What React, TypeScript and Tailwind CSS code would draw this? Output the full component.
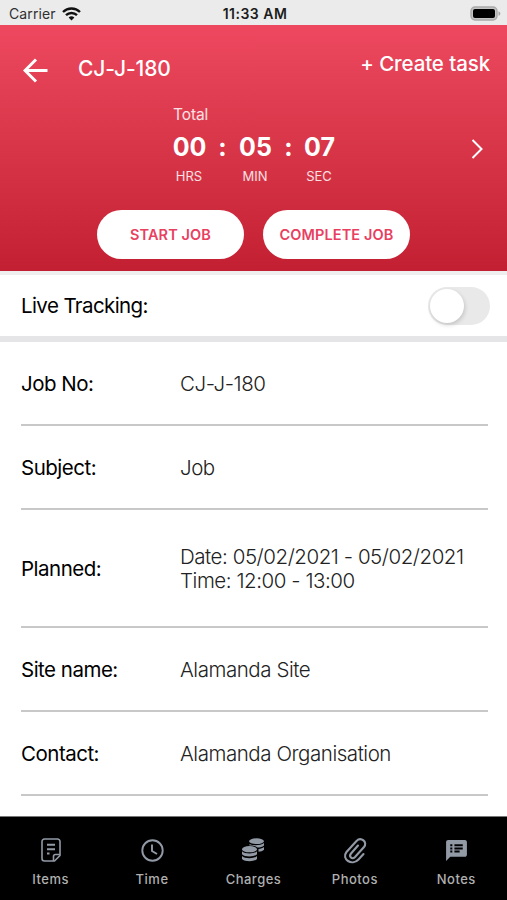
import { MdSpeakerNotes } from "react-icons/md";

type Detail = { label: string; lines: string[]; height: string };

const details: Detail[] = [
  { label: "Job No:", lines: ["CJ-J-180"], height: "h-[84px]" },
  { label: "Subject:", lines: ["Job"], height: "h-[84px]" },
  {
    label: "Planned:",
    lines: ["Date: 05/02/2021 - 05/02/2021", "Time: 12:00 - 13:00"],
    height: "h-[118px]",
  },
  { label: "Site name:", lines: ["Alamanda Site"], height: "h-[84px]" },
  { label: "Contact:", lines: ["Alamanda Organisation"], height: "h-[84px]" },
];

export default function App() {
  return (
    <div className="flex h-[900px] w-[507px] flex-col overflow-hidden bg-white font-['Inter','Liberation_Sans',sans-serif] text-black">
      <StatusBar />
      <JobHeader />
      <LiveTracking />

      <main className="flex-1 overflow-hidden pl-[21px] pr-[19px]">
        {details.map((detail) => (
          <DetailRow key={detail.label} {...detail} />
        ))}
      </main>

      <TabBar />
    </div>
  );
}

/* ---------------- STATUS BAR ---------------- */

function StatusBar() {
  return (
    <div className="grid h-[25px] shrink-0 grid-cols-3 items-center bg-[#ebebeb] pt-[2px] pl-[9px] pr-[6px]">
      <div className="flex items-center gap-[6px]">
        <span className="text-[14px] leading-5 tracking-[0.1px] text-[#303030]">Carrier</span>
        <WifiIcon />
      </div>
      <span className="text-center text-[14px] leading-5 font-semibold tracking-[0.5px] text-[#1c1c1c]">11:33 AM</span>
      <div className="flex justify-end">
        <BatteryIcon />
      </div>
    </div>
  );
}

/* ---------------- HEADER ---------------- */

function JobHeader() {
  return (
    <header className="h-[246px] shrink-0 bg-linear-to-b from-[#ed485f] to-[#c31f32] text-white">
      <div className="flex h-[80px] items-start pl-[23px] pr-[17px]">
        <svg className="mt-[33px]" width="25" height="25" viewBox="0 0 25 25" fill="none" stroke="currentColor" strokeWidth="3">
          <path d="M24.5 12.5H2M13 1.5L2 12.5l11 11" />
        </svg>
        <h1 className="mt-[30px] ml-[30px] text-[21px] leading-7 font-medium tracking-[-0.1px]">CJ-J-180</h1>
        <button className="mt-[25px] ml-auto text-[20.5px] leading-7 font-medium tracking-[-0.1px]">+ Create task</button>
      </div>

      <div className="flex h-[105px] items-start pl-[173px] pr-[24px]">
        <div>
          <p className="text-[15.5px] leading-5 tracking-[-0.1px] text-white/85">Total</p>
          <div className="mt-[6px] flex">
            <TimeUnit value="00" unit="HRS" />
            <Colon />
            <TimeUnit value="05" unit="MIN" />
            <Colon />
            <div className="-ml-[2px]">
              <TimeUnit value="07" unit="SEC" />
            </div>
          </div>
        </div>
        <svg className="mt-[34px] ml-auto" width="12" height="20" viewBox="0 0 12 20" fill="none" stroke="currentColor" strokeWidth="2">
          <path d="M1.5 1l9 9-9 9" />
        </svg>
      </div>

      <div className="flex gap-[19px] pl-[97px]">
        <JobButton>START JOB</JobButton>
        <JobButton>COMPLETE JOB</JobButton>
      </div>
    </header>
  );
}

function TimeUnit({ value, unit }: { value: string; unit: string }) {
  return (
    <div className="flex w-[33px] flex-col items-center">
      <span className="text-[25px] leading-8 font-bold">{value}</span>
      <span className="mt-[3px] -ml-px text-[13px] leading-5 text-white/85">{unit}</span>
    </div>
  );
}

function Colon() {
  return <span className="w-[33px] text-center text-[25px] leading-8 font-bold">:</span>;
}

function JobButton({ children }: { children: React.ReactNode }) {
  return (
    <button className="h-[49px] w-[147px] rounded-full bg-white text-[14.5px] font-semibold tracking-[0.1px] text-[#e8405f]">
      {children}
    </button>
  );
}

/* ---------------- CONTENT ---------------- */

function LiveTracking() {
  return (
    <div className="flex h-[71px] shrink-0 items-center justify-between border-t-4 border-b-6 border-t-[#f0eff0] border-b-[#e5e5e8] pl-[21px] pr-[17px]">
      <span className="pt-[2px] text-[20.5px] tracking-[-0.6px]">Live Tracking:</span>
      <div className="flex h-[38px] w-[62px] items-center rounded-full bg-[#e9e9e9] p-[2px]">
        <div className="size-[34px] rounded-full bg-white shadow-[1px_2px_4px_rgba(0,0,0,0.16)]" />
      </div>
    </div>
  );
}

function DetailRow({ label, lines, height }: Detail) {
  return (
    <div className={`flex items-center border-b-2 border-[#c8c8c8] ${height}`}>
      <span className="w-[159px] pt-[3px] text-[20.5px] tracking-[-0.5px]">{label}</span>
      <div className="pt-[2px] text-[20.5px] leading-6 font-light tracking-[-0.45px] text-[#222]">
        {lines.map((line) => (
          <p key={line} className="whitespace-nowrap">
            {line}
          </p>
        ))}
      </div>
    </div>
  );
}

/* ---------------- TAB BAR ---------------- */

function TabBar() {
  return (
    <nav className="grid h-[84px] shrink-0 grid-cols-5 border-t border-[#777] bg-black text-[#929aa6]">
      <Tab label="Items">
        <ItemsIcon />
      </Tab>
      <Tab label="Time">
        <ClockIcon />
      </Tab>
      <Tab label="Charges">
        <CoinsIcon />
      </Tab>
      <Tab label="Photos">
        <ClipIcon />
      </Tab>
      <Tab label="Notes">
        <MdSpeakerNotes size={25} />
      </Tab>
    </nav>
  );
}

function Tab({ label, children }: { label: string; children: React.ReactNode }) {
  return (
    <div className="flex flex-col items-center pt-[19px]">
      <div className="flex h-[28px] items-center justify-center">{children}</div>
      <span className="mt-[5px] text-[13px] leading-5 font-medium tracking-[0.5px] text-[#b0b0b0]">{label}</span>
    </div>
  );
}

/* ---------------- ICONS ---------------- */

function WifiIcon() {
  return (
    <svg width="19" height="14" viewBox="0 0 19 14" fill="none" stroke="#111" strokeWidth="2.4">
      <path d="M1 5a12.2 12.2 0 0 1 17 0M4 8.2a7.8 7.8 0 0 1 11 0" />
      <path d="M9.5 13.5L6.6 10.6a4.1 4.1 0 0 1 5.8 0z" fill="#111" stroke="none" />
    </svg>
  );
}

function BatteryIcon() {
  return (
    <svg width="31" height="15" viewBox="0 0 31 15">
      <rect x="1" y="1" width="26" height="13" rx="4" fill="#c4c4c4" stroke="#a9a9a9" strokeWidth="1.4" />
      <rect x="3" y="3" width="22" height="9" rx="2" fill="#000" />
      <path d="M28.5 5.2c2.4.8 2.4 3.8 0 4.6z" fill="#a5a5a5" />
    </svg>
  );
}

function ItemsIcon() {
  return (
    <svg width="20" height="24" viewBox="0 0 20 24" fill="none" stroke="currentColor" strokeWidth="1.6" strokeLinejoin="round">
      <path d="M3.5 1h13A2.5 2.5 0 0 1 19 3.5v14L13.5 23h-10A2.5 2.5 0 0 1 1 20.5v-17A2.5 2.5 0 0 1 3.5 1z" />
      <path d="M19 16.5h-4.5a2 2 0 0 0-2 2V23" />
      <path d="M6 6.8h8M6 11.2h8M6 15.6h2.5" strokeWidth="2" />
    </svg>
  );
}

function ClockIcon() {
  return (
    <svg className="ml-px" width="23" height="23" viewBox="0 0 23 23" fill="none" stroke="currentColor" strokeWidth="1.9">
      <circle cx="11.5" cy="11.5" r="10.2" />
      <path d="M11 5.5V12l5 3" />
    </svg>
  );
}

function CoinsIcon() {
  return (
    <svg width="24" height="24" viewBox="0 0 24 24" fill="currentColor">
      <ellipse cx="15.5" cy="3.2" rx="7.5" ry="2.9" />
      <path d="M8.5 6c3 1.8 11.500 1.600 14.500-1v2.600c-1.500 1.600-4 2-6.500 2-2-1.800-5-2.300-8-2.100zM17.500 11c2.300-.2 4.300-.8 5.500-1.900v2.600c-1.200 1.300-3.200 1.900-5.500 2.100z" />
      <ellipse cx="8.5" cy="11.2" rx="7.5" ry="3.1" />
      <path d="M1 13.200c2.500 3 12.500 3 15 0v3c-2.500 3-12.500 3-15 0zM1 18c2.500 3 12.500 3 15 0v3c-2.500 3-12.500 3-15 0z" />
    </svg>
  );
}

function ClipIcon() {
  return (
    <svg width="24" height="28" viewBox="0 0 24 28" fill="none" stroke="currentColor" strokeWidth="2.1" strokeLinecap="round">
      <path d="M20.5 18l-5 5.5C9 30.5-2 23 3.5 16L13.500 5c4.500-4.500 11.500 1 7.500 6L12 21c-3 3-6.500-.5-4-3.500l7-8" />
    </svg>
  );
}
